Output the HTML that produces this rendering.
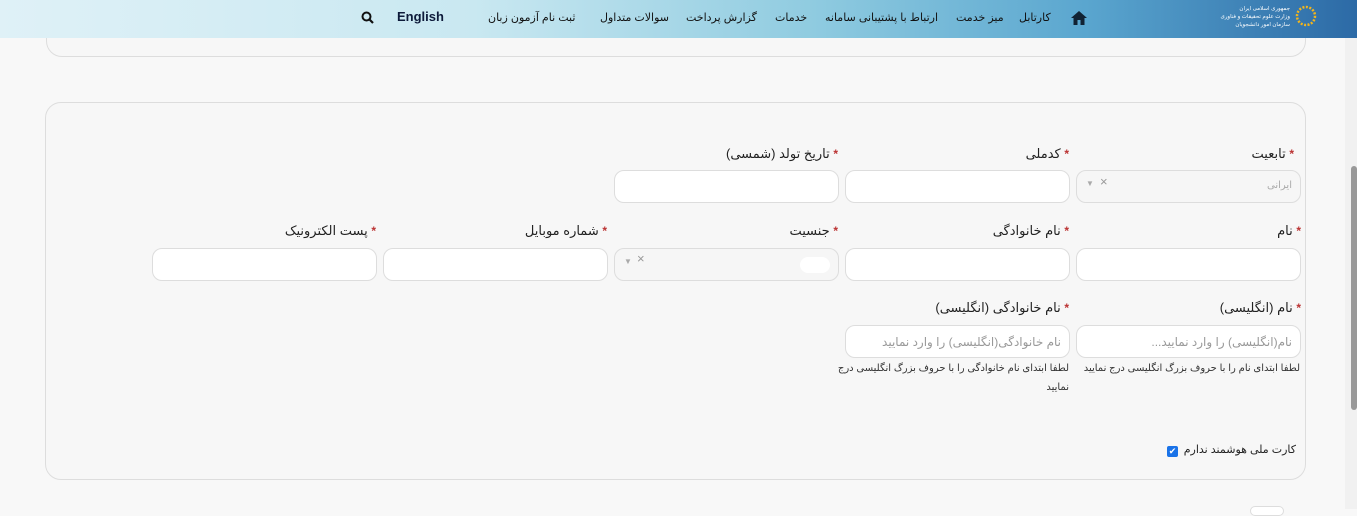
<!DOCTYPE html>
<html><head><meta charset="utf-8"><style>
*{box-sizing:border-box;margin:0;padding:0}
body{width:1357px;height:509px;overflow:hidden;background:#f8f8f8;font-family:"Liberation Sans","DejaVu Sans",sans-serif;position:relative;color:#222}
.hdr{position:absolute;left:0;top:0;width:1357px;height:38px;background:linear-gradient(90deg,#dff1f7 0%,#c9e8f1 35%,#8fcbe0 60%,#5aa6cf 80%,#2c6aa6 100%);z-index:5}
.z{z-index:6}
.nav{position:absolute;top:11px;font-size:11px;color:#111;white-space:nowrap;direction:rtl;z-index:6}
.card{position:absolute;border:1px solid #ddd;border-radius:16px;background:#f7f7f7}
.lbl{position:absolute;font-size:13px;color:#222;direction:rtl;white-space:nowrap;text-align:right}
.lbl b{color:#b33;font-weight:bold;font-size:12px}
.inp{position:absolute;height:33px;width:225px;background:#fff;border:1px solid #ddd;border-radius:10px}
.sel{background:#f6f6f6}
.ph{position:absolute;right:8px;top:9px;font-size:12px;color:#999;direction:rtl;white-space:nowrap}
.help{position:absolute;font-size:10px;color:#333;direction:rtl;white-space:nowrap}
</style></head><body>
<div class="card" style="left:46px;top:10px;width:1260px;height:47px"></div>
<div class="card" style="left:45px;top:102px;width:1261px;height:378px"></div>

<div class="hdr"></div>
<svg class="z" style="position:absolute;left:1293px;top:3px" width="26" height="26" viewBox="0 0 26 26"><circle cx="13" cy="13" r="9" fill="none" stroke="#f2b51c" stroke-width="2.5" stroke-dasharray="2 1.5"/></svg>
<div class="z" style="position:absolute;left:1222px;top:5px;font-size:5.5px;color:#fff;line-height:8px;direction:rtl;text-align:right;width:68px;white-space:nowrap">جمهوری اسلامی ایران<br>وزارت علوم تحقیقات و فناوری<br>سازمان امور دانشجویان</div>
<svg class="z" style="position:absolute;left:1070px;top:10px" width="18" height="16" viewBox="0 0 18 16"><path d="M9 1L1 8h2.5v7h4v-5h3v5h4V8H17z" fill="#123"/></svg>
<div class="nav" style="left:1019px">کارتابل</div>
<div class="nav" style="left:956px">میز خدمت</div>
<div class="nav" style="left:825px">ارتباط با پشتیبانی سامانه</div>
<div class="nav" style="left:775px">خدمات</div>
<div class="nav" style="left:686px">گزارش پرداخت</div>
<div class="nav" style="left:600px">سوالات متداول</div>
<div class="nav" style="left:488px">ثبت نام آزمون زبان</div>
<div class="z" style="position:absolute;left:397px;top:9px;font-size:13px;font-weight:bold;color:#0d1a3a">English</div>
<svg class="z" style="position:absolute;left:361px;top:11px" width="13" height="13" viewBox="0 0 13 13"><circle cx="5.5" cy="5.5" r="4" fill="none" stroke="#111" stroke-width="2"/><path d="M8.5 8.5L12 12" stroke="#111" stroke-width="2.2"/></svg>

<div class="lbl" style="right:63px;top:146px"><b>*</b> تابعیت</div>
<div class="lbl" style="right:288px;top:146px"><b>*</b> کدملی</div>
<div class="lbl" style="right:519px;top:146px"><b>*</b> تاریخ تولد (شمسی)</div>
<div class="inp sel" style="left:1076px;top:170px"><span class="ph" style="font-size:10px;color:#aaa">ایرانی</span><span style="position:absolute;left:23px;top:3px;color:#999;font-size:13px">×</span><span style="position:absolute;left:9px;top:8px;color:#aaa;font-size:8px">▼</span></div>
<div class="inp" style="left:845px;top:170px"></div>
<div class="inp" style="left:614px;top:170px"></div>

<div class="lbl" style="right:56px;top:223px"><b>*</b> نام</div>
<div class="lbl" style="right:288px;top:223px"><b>*</b> نام خانوادگی</div>
<div class="lbl" style="right:519px;top:223px"><b>*</b> جنسیت</div>
<div class="lbl" style="right:750px;top:223px"><b>*</b> شماره موبایل</div>
<div class="lbl" style="right:981px;top:223px"><b>*</b> پست الکترونیک</div>
<div class="inp" style="left:1076px;top:248px"></div>
<div class="inp" style="left:845px;top:248px"></div>
<div class="inp sel" style="left:614px;top:248px"><span style="position:absolute;left:22px;top:2px;color:#999;font-size:13px">×</span><span style="position:absolute;left:9px;top:8px;color:#aaa;font-size:8px">▼</span><span style="position:absolute;right:8px;top:8px;width:30px;height:16px;background:#fff;border-radius:8px"></span></div>
<div class="inp" style="left:383px;top:248px"></div>
<div class="inp" style="left:152px;top:248px"></div>

<div class="lbl" style="right:56px;top:300px"><b>*</b> نام (انگلیسی)</div>
<div class="lbl" style="right:288px;top:300px"><b>*</b> نام خانوادگی (انگلیسی)</div>
<div class="inp" style="left:1076px;top:325px"><span class="ph">نام(انگلیسی) را وارد نمایید...</span></div>
<div class="inp" style="left:845px;top:325px"><span class="ph">نام خانوادگی(انگلیسی) را وارد نمایید</span></div>
<div class="help" style="right:57px;top:363px">لطفا ابتدای نام را با حروف بزرگ انگلیسی درج نمایید</div>
<div class="help" style="right:288px;top:363px">لطفا ابتدای نام خانوادگی را با حروف بزرگ انگلیسی درج</div>
<div class="help" style="right:288px;top:382px">نمایید</div>

<div class="lbl" style="right:61px;top:443px;font-size:11px">کارت ملی هوشمند ندارم</div>
<div style="position:absolute;left:1167px;top:446px;width:11px;height:11px;background:#1a73e8;border-radius:2px;color:#fff;font-size:9px;line-height:11px;text-align:center">✔</div>

<div style="position:absolute;left:1345px;top:38px;width:12px;height:471px;background:#f1f1f1;z-index:7"></div>
<div style="position:absolute;left:1351px;top:166px;width:6px;height:244px;background:#999;border-radius:3px;z-index:8"></div>
<div style="position:absolute;left:1250px;top:506px;width:34px;height:10px;border:1px solid #ddd;border-radius:6px;background:#fff"></div>
</body></html>
